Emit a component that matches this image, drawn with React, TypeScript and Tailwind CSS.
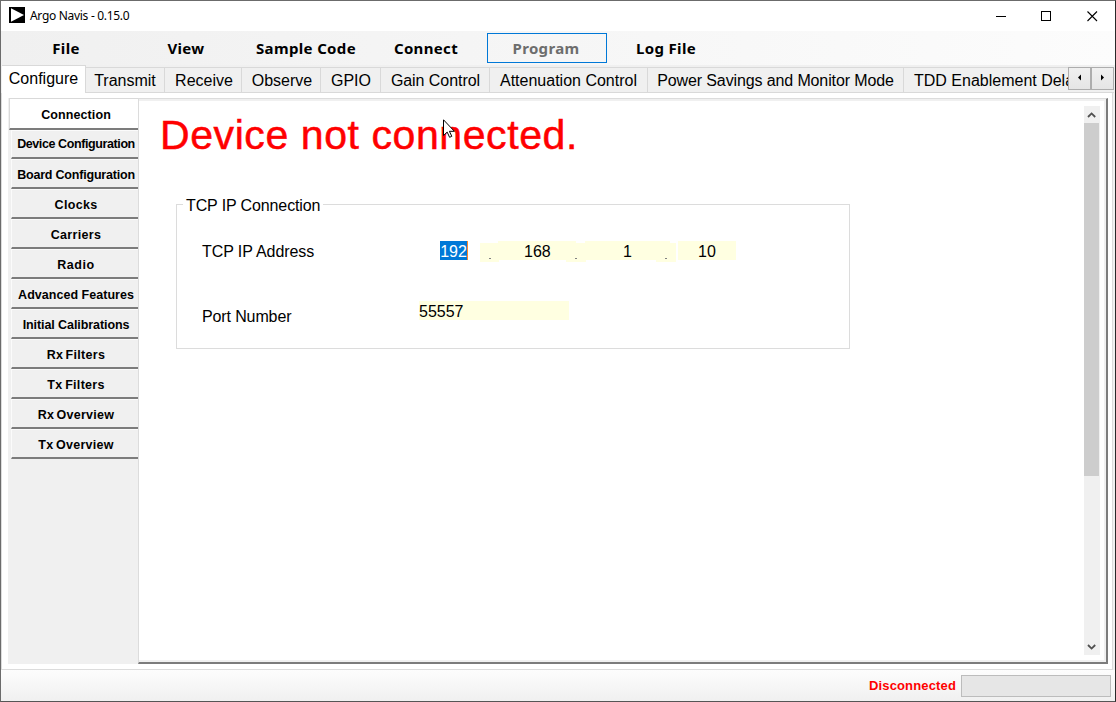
const menu = [
  { label: "File", cls: "" },
  { label: "View", cls: "" },
  { label: "Sample Code", cls: "" },
  { label: "Connect", cls: "" },
  { label: "Program", cls: "border border-[#0078d7] text-[#6d6d6d]" },
  { label: "Log File", cls: "" },
];

const tabs = [
  { label: "Transmit", cls: "w-[79px]" },
  { label: "Receive", cls: "w-[77px] pl-[2px]" },
  { label: "Observe", cls: "w-[79px] pl-[2px]" },
  { label: "GPIO", cls: "w-[60px] pl-px" },
  { label: "Gain Control", cls: "w-[109px] pl-px tracking-[-0.05px]" },
  { label: "Attenuation Control", cls: "w-[158px]" },
  { label: "Power Savings and Monitor Mode", cls: "w-[256px] tracking-[-0.12px]" },
];

const side = [
  { label: "Device Configuration", cls: "tracking-[-0.4px]" },
  { label: "Board Configuration", cls: "tracking-[-0.2px]" },
  { label: "Clocks", cls: "tracking-[0.3px]" },
  { label: "Carriers", cls: "tracking-[0.35px]" },
  { label: "Radio", cls: "tracking-[0.6px]" },
  { label: "Advanced Features", cls: "tracking-[0.03px]" },
  { label: "Initial Calibrations", cls: "tracking-[-0.08px]" },
  { label: "Rx Filters", cls: "tracking-[0.3px] [word-spacing:-1.5px]" },
  { label: "Tx Filters", cls: "tracking-[0.3px] [word-spacing:-1px]" },
  { label: "Rx Overview", cls: "tracking-[0.25px] [word-spacing:-1.5px]" },
  { label: "Tx Overview", cls: "tracking-[0.25px] [word-spacing:-1px]" },
];

function TitleBar() {
  return (
    <header className="flex h-[30px] shrink-0 items-center bg-white pl-2">
      <svg width="16" height="16" viewBox="0 0 16 16" className="-mt-[2px]">
        <rect width="16" height="16" fill="#000" />
        <path d="M2 1.3 15 8 2 14.7Z" fill="#fff" />
      </svg>
      <span className="ml-[5px] font-['Noto_Sans',sans-serif] text-[12px] leading-[16px] tracking-[-0.3px]">
        Argo Navis - 0.15.0
      </span>
      <svg width="104" height="12" viewBox="0 0 104 12" className="mr-[16px] ml-auto -mt-[1px]" fill="none" stroke="#000" shapeRendering="crispEdges">
        <path d="M1 6.5h10M46.5 1.5h9v9h-9z" />
        <path d="m92.5 1.5 9.5 9.5m0-9.5-9.5 9.5" shapeRendering="auto" strokeWidth="1.1" />
      </svg>
    </header>
  );
}

function MenuBar() {
  return (
    <nav className="flex h-[34px] shrink-0 bg-linear-to-r from-[#f0f0f0] to-[#fcfcfc] pt-[2px] pl-[6px] font-['Noto_Sans',sans-serif] text-[15px] font-bold tracking-[0.35px]">
      {menu.map((m) => (
        <div key={m.label} className={"flex h-[30px] w-[120px] items-center justify-center pr-[2px] " + m.cls}>
          {m.label}
        </div>
      ))}
    </nav>
  );
}

function TabStrip() {
  return (
    <div className="flex h-[28px] shrink-0 items-end bg-[#f0f0f0] pl-px text-[16px] leading-[18px]">
      <div className="flex h-[28px] w-[84px] shrink-0 items-start justify-center border-t border-r border-[#d9d9d9] bg-white pt-[4px]">
        Configure
      </div>
      {tabs.map((t) => (
        <div
          key={t.label}
          className={"flex h-[26px] shrink-0 items-start justify-center whitespace-nowrap border-t border-r border-b border-[#d9d9d9] pt-[4px] " + t.cls}
        >
          {t.label}
        </div>
      ))}
      <div className="h-[26px] min-w-0 flex-1 overflow-hidden whitespace-nowrap border-t border-b border-[#d9d9d9] pt-[4px] pl-[10px]">
        TDD Enablement Delays
      </div>
      <div className="mr-px flex h-[26px] shrink-0 border-b border-[#d9d9d9]">
        {["M7 9.5v6l-3-3z", "M4 9.5v6l3-3z"].map((d) => (
          <div key={d} className="flex h-[23px] w-[23px] items-center justify-center border border-[#adadad] bg-linear-to-b from-[#f0f0f0] to-[#e5e5e5]">
            <svg width="11" height="24" viewBox="0 0 11 24" className="-mt-[3px]">
              <path d={d} />
            </svg>
          </div>
        ))}
      </div>
    </div>
  );
}

function Sidebar() {
  return (
    <aside className="flex w-[130px] shrink-0 flex-col bg-[#f0f0f0] text-[12.5px] leading-[15px] font-bold">
      <div className="ml-px flex h-[32px] items-center justify-center border-t border-b-2 border-l border-t-[#d9d9d9] border-b-[#7c7c7c] border-l-[#d9d9d9] bg-white pt-[3px] pl-[4px] tracking-[0.1px]">
        Connection
      </div>
      <div className="flex flex-col pl-[3px]">
        {side.map((s, i) => (
          <div
            key={s.label}
            className={
              "flex items-center justify-center whitespace-nowrap border-t border-b-2 border-l border-t-[#fbfbfb] border-b-[#7c7c7c] border-l-[#fbfbfb] pl-[2px] " +
              (i === 0 ? "h-[29px] pt-px " : "h-[30px] pt-[3px] ") +
              s.cls
            }
          >
            {s.label}
          </div>
        ))}
      </div>
    </aside>
  );
}

function Dot({ cls }: { cls: string }) {
  return (
    <span className={"mt-[2px] flex h-[19px] items-end bg-[#ffffe1] pb-[3px] pl-[9px] " + cls}>
      <i className="h-px w-[2px] bg-[#808080]" />
    </span>
  );
}

function Connection() {
  return (
    <section className="relative mt-[46px] ml-[37px] h-[145px] w-[674px] border border-[#dcdcdc] text-[16px] leading-[18px]">
      <h2 className="absolute -top-[8px] left-[6px] bg-white px-[3px] tracking-[-0.12px]">TCP IP Connection</h2>
      <div className="flex pt-[36px] pl-[25px]">
        <span className="w-[238px] pt-[2px] tracking-[-0.08px]">TCP IP Address</span>
        <span className="h-[19px] w-[28px] border-r border-[#ff8728] bg-[#0078d7] pt-[2px] text-center text-white">192</span>
        <Dot cls="ml-[12px] w-[19px]" />
        <span className="-ml-px h-[19px] w-[78px] bg-[#ffffe1] pt-[2px] pl-[26px]">168</span>
        <Dot cls="-ml-[10px] w-[20px]" />
        <span className="-ml-px h-[19px] w-[85px] bg-[#ffffe1] pt-[2px] pl-[38px]">1</span>
        <Dot cls="-ml-[14px] w-[20px]" />
        <span className="ml-[2px] h-[19px] w-[58px] bg-[#ffffe1] pt-[2px] pl-[20px]">10</span>
      </div>
      <div className="mt-[39px] flex pl-[25px]">
        <span className="w-[217px] pt-[7px] tracking-[-0.12px]">Port Number</span>
        <span className="h-[19px] w-[150px] bg-[#ffffe1] pt-[2px]">55557</span>
      </div>
    </section>
  );
}

function ScrollBar() {
  return (
    <div className="mt-[5px] mr-[4px] flex h-[549px] w-[16px] flex-col items-center bg-[#f0f0f0]">
      <svg width="16" height="17" viewBox="0 0 16 17" fill="none" stroke="#505050" strokeWidth="1.8">
        <path d="m4 11 3.6-3.6 3.6 3.6" />
      </svg>
      <div className="h-[353px] w-[15px] self-start bg-[#cdcdcd]" />
      <svg width="16" height="17" viewBox="0 0 16 17" fill="none" stroke="#505050" strokeWidth="1.8" className="mt-auto">
        <path d="m4 7 3.6 3.6 3.6-3.6" />
      </svg>
    </div>
  );
}

export default function App() {
  return (
    <div className="relative flex h-[702px] w-[1116px] flex-col overflow-hidden border border-t-[#6b6b6b] border-r-[#292929] border-b-[#555] border-l-[#6b6b6b] bg-[#f0f0f0] font-['Liberation_Sans',Arial,sans-serif] text-black">
      <TitleBar />
      <MenuBar />
      <TabStrip />
      <main className="mr-[2px] flex h-[577px] shrink-0 border-r border-b border-l border-[#dcdcdc] bg-white pt-[5px] pr-[4px] pb-[5px] pl-[6px]">
        <Sidebar />
        <div className="flex min-w-0 flex-1 border-t border-r-2 border-b-2 border-l border-t-[#dcdcdc] border-r-[#7c7c7c] border-b-[#7c7c7c] border-l-[#dcdcdc]">
          <div className="flex min-w-0 flex-1 border-t-2 border-r-2 border-b-2 border-[#f0f0f0]">
            <div className="min-w-0 flex-1">
              <h1 className="pt-[11px] pl-[21px] text-[41px] leading-[46px] tracking-[0.58px] whitespace-nowrap text-[#ff0000] [-webkit-text-stroke:0.5px_#ff0000]">
                Device not connected.
              </h1>
              <Connection />
            </div>
            <ScrollBar />
          </div>
        </div>
      </main>
      <footer className="flex flex-1 items-center justify-end bg-linear-to-b from-[#fdfdfd] to-[#f0f0f0] pr-[4px]">
        <span className="mr-[5px] text-[13px] font-bold tracking-[0.15px] text-[#ff0000]">Disconnected</span>
        <div className="h-[22px] w-[150px] border border-[#bcbcbc] bg-[#e6e6e6]" />
      </footer>
      <svg width="12" height="19" viewBox="0 0 12 19" className="absolute top-[118px] left-[442px]">
        <path d="M.5.8v15.7l3.7-3.4 2.4 5.2 2.2-1-2.4-5h5z" fill="#fff" stroke="#000" />
      </svg>
    </div>
  );
}
